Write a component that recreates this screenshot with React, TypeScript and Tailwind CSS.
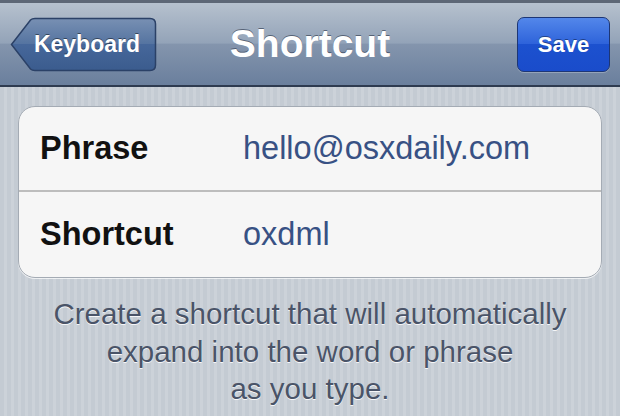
import React from 'react';

const font = { fontFamily: '"Liberation Sans", Arial, sans-serif' };

const BackButton: React.FC<{ label: string }> = ({ label }) => (
  <button className="relative w-[147px] h-[55px] flex items-center justify-end pr-[17px]">
    <svg className="absolute inset-0" width="147" height="55" viewBox="0 0 147 55">
      <defs>
        <linearGradient id="backFill" x1="0" y1="0" x2="0" y2="1">
          <stop offset="0" stopColor="#7890b3" />
          <stop offset="0.5" stopColor="#5473a0" />
          <stop offset="0.5" stopColor="#46679a" />
          <stop offset="1" stopColor="#3b5c8e" />
        </linearGradient>
      </defs>
      <path
        d="M1.5 27.5 L20.5 3 Q22 1.5 25 1.5 L140 1.5 Q145.5 1.5 145.5 7 L145.5 48 Q145.5 53.5 140 53.5 L25 53.5 Q22 53.5 20.5 52 Z"
        fill="url(#backFill)"
        stroke="#2b4167"
        strokeWidth="1.5"
      />
    </svg>
    <span className="relative text-[23px] font-bold text-white [text-shadow:0_-1px_0_rgba(0,0,0,0.45)]">{label}</span>
  </button>
);

export default function App() {
  return (
    <div className="w-[620px] h-[416px] overflow-hidden flex flex-col bg-[repeating-linear-gradient(90deg,#c4cbd3_0px,#c4cbd3_4px,#ccd2d9_4px,#ccd2d9_7px)]" style={font}>
      {/* nav bar */}
      <div className="h-[87px] shrink-0 border-t-[3px] border-t-[#5d6776] border-b-2 border-b-[#2e3b50] bg-[linear-gradient(180deg,#b6c1ce_0%,#93a3b8_49%,#8495ad_50%,#6a7f9d_100%)] grid grid-cols-[1fr_auto_1fr] items-center px-[10px]">
        <div className="flex">
          <BackButton label="Keyboard" />
        </div>
        <h1 className="text-[39px] font-bold text-white leading-none -mt-[2px] [text-shadow:0_-1px_0_rgba(40,50,70,0.6)]">Shortcut</h1>
        <div className="flex justify-end">
          <button className="w-[93px] h-[55px] rounded-[7px] border-[1.5px] border-[#1d3675] bg-[linear-gradient(180deg,#5387ea_0%,#2d62da_50%,#1c51cf_50%,#1a4ccb_100%)] text-[22px] font-bold text-white [text-shadow:0_-1px_0_rgba(0,0,0,0.4)] shadow-[0_1px_0_rgba(255,255,255,0.25)]">
            Save
          </button>
        </div>
      </div>

      {/* card */}
      <div className="mx-[18px] mt-[19px] rounded-[17px] border border-[#a4abb4] bg-[#f6f6f6] shadow-[0_1px_0_rgba(255,255,255,0.7)]">
        <div className="h-[85px] flex items-center border-b-2 border-b-[#bdbdbd]">
          <span className="w-[224px] pl-[21px] text-[32.5px] font-bold text-[#111]">Phrase</span>
          <span className="text-[32.5px] text-[#385184]">hello@osxdaily.com</span>
        </div>
        <div className="h-[85px] flex items-center">
          <span className="w-[224px] pl-[21px] text-[32.5px] font-bold text-[#111]">Shortcut</span>
          <span className="text-[32.5px] text-[#385184]">oxdml</span>
        </div>
      </div>

      {/* footer note */}
      <p className="mt-[17px] text-center text-[29.5px] leading-[37.5px] text-[#4a5468] [text-shadow:0_1px_0_rgba(255,255,255,0.85)]">
        Create a shortcut that will automatically
        <br />
        expand into the word or phrase
        <br />
        as you type.
      </p>
    </div>
  );
}
